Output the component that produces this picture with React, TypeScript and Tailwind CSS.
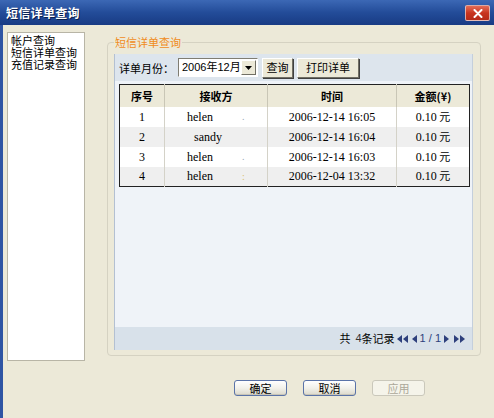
import React from "react";

type Row = { id: number; to: string; mark: string; time: string; amount: string };

const ROWS: Row[] = [
  { id: 1, to: "helen", mark: ".", time: "2006-12-14 16:05", amount: "0.10" },
  { id: 2, to: "sandy", mark: "", time: "2006-12-14 16:04", amount: "0.10" },
  { id: 3, to: "helen", mark: ".", time: "2006-12-14 16:03", amount: "0.10" },
  { id: 4, to: "helen", mark: ":", time: "2006-12-04 13:32", amount: "0.10" },
];

const CJK = "font-['SimSun','Noto_Sans_CJK_SC',sans-serif]";
const SERIF = "font-['Liberation_Serif','Noto_Sans_CJK_SC',serif]";

function XpButton({ label, w, disabled }: { label: string; w: string; disabled?: boolean }) {
  return (
    <button
      className={`${w} h-[16px] rounded-[3px] border text-[11px] leading-none flex items-center justify-center ${
        disabled
          ? "border-[#cac8bb] bg-[#f5f4ea] text-[#aca899]"
          : "border-[#5a73a8] bg-gradient-to-b from-white via-[#f2f1ea] to-[#dcd9cc] text-black shadow-[inset_0_-1px_0_#c8c5b8]"
      }`}
    >
      {label}
    </button>
  );
}

function ToolButton({ label, w }: { label: string; w: string }) {
  return (
    <button
      className={`${w} h-[20px] text-[11px] text-black bg-[#ece9d8] border border-t-white border-l-white border-r-[#716f64] border-b-[#716f64] shadow-[1px_1px_0_#404040] flex items-center justify-center`}
    >
      {label}
    </button>
  );
}

function Arrow({ dir }: { dir: "l" | "r" }) {
  return (
    <svg width="5" height="8" viewBox="0 0 5 8" className="block">
      {dir === "l" ? <path d="M5 0 L0 4 L5 8 Z" fill="#2d3f7c" /> : <path d="M0 0 L5 4 L0 8 Z" fill="#2d3f7c" />}
    </svg>
  );
}

export default function App() {
  return (
    <div className={`w-[494px] h-[418px] overflow-hidden bg-[#ece9d8] flex flex-col ${CJK}`}>
      {/* Title bar */}
      <div className="h-[25px] shrink-0 bg-gradient-to-b from-[#3c68b5] via-[#234c99] to-[#183b84] flex items-center justify-between pl-[6px] pr-[4px]">
        <span className="text-white text-[12px] font-bold tracking-[0.3px] [text-shadow:1px_1px_0_#0a1f4f]">短信详单查询</span>
        <div className="w-[25px] h-[16px] mt-[1px] rounded-[2px] border border-[#e8e0e0]/70 bg-gradient-to-b from-[#e36b55] via-[#c8341f] to-[#b52a18] flex items-center justify-center">
          <svg width="10" height="9" viewBox="0 0 10 9">
            <path d="M1.5 1 L8.5 8 M8.5 1 L1.5 8" stroke="white" strokeWidth="2" strokeLinecap="round" />
          </svg>
        </div>
      </div>

      {/* Body */}
      <div className="flex-1 flex border-l-[3px] border-[#2f55a4]">
        <div className="flex flex-col">
          <div className="flex pt-[7px] pl-[4px]">
            {/* Left nav list */}
            <div className="w-[78px] h-[329px] bg-white border border-[#b8b5a6] pl-[3px] pt-[1px] text-[11px] leading-[12px] text-black">
              <div>帐户查询</div>
              <div>短信详单查询</div>
              <div>充值记录查询</div>
            </div>

            {/* Group box */}
            <div className="relative ml-[22px] mt-[10px] w-[374px] h-[314px] border border-[#d5d2c2] rounded-[4px] pt-[11px] px-[6px]">
              <span className="absolute left-[6px] -top-[8px] px-[1px] bg-[#ece9d8] text-[11px] leading-[14px] text-[#f08c1c]">短信详单查询</span>

              {/* Inner panel */}
              <div className="w-[359px] h-[296px] flex flex-col bg-[#eff3f8] border-l border-[#b3c0d2] border-r border-r-[#c4cfdc]">
                {/* Toolbar */}
                <div className="h-[27px] shrink-0 bg-[#dde5ed] flex items-center pl-[4px] gap-[4px]">
                  <span className="text-[11px] text-black whitespace-nowrap mt-[2px]">详单月份：</span>
                  <div className="w-[80px] h-[19px] bg-white border border-t-[#7f7d72] border-l-[#7f7d72] border-r-white border-b-white flex items-center">
                    <span className="flex-1 pl-[3px] text-[11px] leading-none whitespace-nowrap text-black font-['Liberation_Sans','Noto_Sans_CJK_SC',sans-serif]">2006年12月</span>
                    <div className="w-[15px] h-[15px] shrink-0 mr-[1px] bg-[#ece9d8] border border-t-white border-l-white border-r-[#716f64] border-b-[#716f64] flex items-center justify-center">
                      <svg width="7" height="4" viewBox="0 0 7 4">
                        <path d="M0 0 H7 L3.5 4 Z" fill="black" />
                      </svg>
                    </div>
                  </div>
                  <ToolButton label="查询" w="w-[31px]" />
                  <ToolButton label="打印详单" w="w-[62px]" />
                </div>

                {/* Table area */}
                <div className="flex-1 pt-[3px] pl-[4px]">
                  <table className="w-[350px] border-collapse border border-[#222] text-[11px] text-black table-fixed">
                    <colgroup>
                      <col className="w-[45px]" />
                      <col className="w-[103px]" />
                      <col className="w-[129px]" />
                      <col className="w-[73px]" />
                    </colgroup>
                    <thead>
                      <tr className="h-[22px] bg-[#ece9d8]">
                        <th className="border-r border-[#c9c6b6] font-bold">序号</th>
                        <th className="border-r border-[#c9c6b6] font-bold">接收方</th>
                        <th className="border-r border-[#c9c6b6] font-bold">时间</th>
                        <th className="font-bold">金额(¥)</th>
                      </tr>
                    </thead>
                    <tbody className={`${SERIF} text-[12px]`}>
                      {ROWS.map((r, i) => (
                        <tr key={r.id} className={`h-[20px] ${i % 2 === 1 ? "bg-[#efefef]" : "bg-white"}`}>
                          <td className="border-r border-[#d4d2c8] text-center">{r.id}</td>
                          <td className="border-r border-[#d4d2c8]">
                            <div className={`flex items-center ${r.id === 2 ? "pl-[29px]" : "pl-[22px]"}`}>
                              <span>{r.to}</span>
                              <span className={`ml-[29px] text-[10px] ${r.mark === ":" ? "text-[#d8c070]" : "text-[#9aa8b8]"}`}>{r.mark}</span>
                            </div>
                          </td>
                          <td className="border-r border-[#d4d2c8] text-center">{r.time}</td>
                          <td className="text-center">
                            {r.amount}
                            <span className={`${CJK} text-[11px]`}> 元</span>
                          </td>
                        </tr>
                      ))}
                    </tbody>
                  </table>
                </div>

                {/* Pager */}
                <div className="h-[23px] shrink-0 bg-[#d8e1ea] flex items-center justify-end pr-[7px] text-[11px] text-black">
                  <span>共</span>
                  <span className="ml-[5px] text-[#333] font-['Liberation_Sans',sans-serif] text-[11px]">4</span>
                  <span>条记录</span>
                  <div className="flex items-center ml-[2px] gap-[1px]">
                    <Arrow dir="l" />
                    <Arrow dir="l" />
                  </div>
                  <div className="ml-[4px]"><Arrow dir="l" /></div>
                  <span className="mx-[3px] text-[11px] text-[#2d3f7c] font-['Liberation_Sans',sans-serif]">1 / 1</span>
                  <Arrow dir="r" />
                  <div className="flex items-center ml-[5px] gap-[1px]">
                    <Arrow dir="r" />
                    <Arrow dir="r" />
                  </div>
                </div>
              </div>
            </div>
          </div>

          {/* Dialog buttons */}
          <div className="flex pl-[231px] pt-[19px] gap-[16px]">
            <XpButton label="确定" w="w-[53px]" />
            <XpButton label="取消" w="w-[53px]" />
            <XpButton label="应用" w="w-[53px]" disabled />
          </div>
        </div>
      </div>
    </div>
  );
}
